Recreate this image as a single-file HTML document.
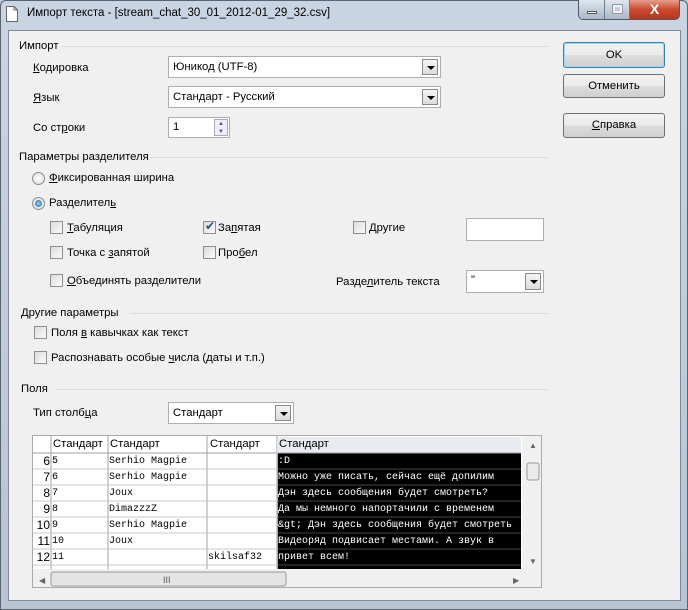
<!DOCTYPE html>
<html><head><meta charset="utf-8"><style>
*{margin:0;padding:0;box-sizing:border-box}
body{width:688px;height:610px;overflow:hidden;background:#bfcbd8;font-family:"Liberation Sans",sans-serif;font-size:11.3px;color:#000;position:relative}
.a{position:absolute;white-space:nowrap}
.frame{position:absolute;left:0;top:0;width:688px;height:610px;background:linear-gradient(#c9d5e2,#b7c4d3);border:1px solid #5a6470;border-radius:6px 6px 0 0}
.client{position:absolute;left:8px;top:30px;width:673px;height:571px;background:#f0f0f0;border:1px solid #7f8a96}
.line{position:absolute;height:1px;background:#d5dfe5}
.btn{position:absolute;width:102px;border:1px solid #707070;border-radius:3px;background:linear-gradient(#f2f2f2 0,#ebebeb 50%,#dddddd 51%,#cfcfcf 100%);text-align:center}
.combo{position:absolute;background:#fff;border:1px solid #abadb3;padding-left:4px}
.dd{position:absolute;right:2px;top:2px;width:16px;bottom:2px;border:1px solid #8a8a8a;background:linear-gradient(#f4f4f4,#dcdcdc)}
.dd:after{content:"";position:absolute;left:4px;top:6px;border-left:4px solid transparent;border-right:4px solid transparent;border-top:4px solid #000}
.cb{position:absolute;width:13px;height:13px;border:1px solid #8e8f8f;background:linear-gradient(135deg,#dcdcdc,#fbfbfb)}
.rb{position:absolute;width:13px;height:13px;border:1px solid #8e8f8f;border-radius:50%;background:radial-gradient(#fff,#d8d8d8)}
u{text-decoration:underline}
.grid{position:absolute;left:32px;top:435px;width:510px;height:153px;border:1px solid #aaa;background:#fff;overflow:hidden}
.mono{font-family:"Liberation Mono",monospace;font-size:10px}
</style></head><body>
<div class="frame"></div>
<svg class="a" style="left:6px;top:6px" width="12" height="16"><path d="M0.5 0.5H8L11.5 4V15.5H0.5Z" fill="#fff" stroke="#666"/><path d="M8 0.5V4H11.5" fill="none" stroke="#666"/></svg>
<div class="a" style="left:27px;top:7px;font-size:11.5px">Импорт текста - [stream_chat_30_01_2012-01_29_32.csv]</div>
<div class="a" style="left:578px;top:0;width:102px;height:20px;border:1px solid #4d5966;border-top:none;border-radius:0 0 5px 5px;overflow:hidden;display:flex">
<div style="width:26px;background:linear-gradient(#dfe6ee,#aab7c5);border-right:1px solid #6e7a88;position:relative"><div style="position:absolute;left:8px;top:11px;width:10px;height:3px;background:#fff;border:1px solid #555"></div></div>
<div style="width:25px;background:linear-gradient(#dfe6ee,#aab7c5);border-right:1px solid #6e7a88;position:relative"><div style="position:absolute;left:8px;top:5px;width:9px;height:8px;border:2px solid #eef;outline:1px solid #999"></div></div>
<div style="flex:1;background:linear-gradient(#e8a08c,#c94a2f 50%,#b8341c);color:#fff;font-weight:bold;font-size:14px;text-align:center;line-height:18px">X</div>
</div>
<div class="client"></div>
<div class="a" style="left:19px;top:40px">Импорт</div>
<div class="line" style="left:62px;top:46px;width:486px"></div>
<div class="a" style="left:33px;top:62px"><u>К</u>одировка</div>
<div class="combo" style="left:168px;top:56px;width:273px;height:22px;line-height:20px">Юникод (UTF-8)<div class="dd"></div></div>
<div class="a" style="left:33px;top:92px"><u>Я</u>зык</div>
<div class="combo" style="left:168px;top:86px;width:273px;height:22px;line-height:20px">Стандарт - Русский<div class="dd"></div></div>
<div class="a" style="left:33px;top:122px">Со ст<u>р</u>оки</div>
<div class="combo" style="left:168px;top:117px;width:62px;height:21px;line-height:19px">1<div style="position:absolute;right:1px;top:1px;width:14px;height:17px;border:1px solid #aaa;background:#eef;font-size:6px;text-align:center;line-height:8px;color:#557">▲<br>▼</div></div>
<div class="btn" style="left:563px;top:42px;height:26px;line-height:24px;border-color:#3c7fb1;box-shadow:inset 0 0 0 1px #9ed9f5">OK</div>
<div class="btn" style="left:563px;top:74px;height:24px;line-height:22px">Отменить</div>
<div class="btn" style="left:563px;top:113px;height:25px;line-height:23px"><u>С</u>правка</div>
<div class="a" style="left:19px;top:151px">Параметры разделителя</div>
<div class="line" style="left:150px;top:157px;width:398px"></div>
<div class="rb" style="left:32px;top:172px"></div>
<div class="a" style="left:49px;top:172px"><u>Ф</u>иксированная ширина</div>
<div class="rb" style="left:32px;top:197px"><div style="position:absolute;left:2px;top:2px;width:7px;height:7px;border-radius:50%;background:radial-gradient(#8fd3ff,#1a5fa8)"></div></div>
<div class="a" style="left:49px;top:197px">Разделител<u>ь</u></div>
<div class="cb" style="left:50px;top:221px"></div><div class="a" style="left:67px;top:222px"><u>Т</u>абуляция</div>
<div class="cb" style="left:203px;top:221px"><span style="position:absolute;left:1px;top:-3px;color:#2a4d8f;font-size:12px">✔</span></div><div class="a" style="left:218px;top:222px">За<u>п</u>ятая</div>
<div class="cb" style="left:353px;top:221px"></div><div class="a" style="left:369px;top:222px"><u>Д</u>ругие</div>
<div class="combo" style="left:466px;top:218px;width:78px;height:23px"></div>
<div class="cb" style="left:50px;top:246px"></div><div class="a" style="left:67px;top:247px">Точка с <u>з</u>апятой</div>
<div class="cb" style="left:203px;top:246px"></div><div class="a" style="left:218px;top:247px">Про<u>б</u>ел</div>
<div class="cb" style="left:50px;top:274px"></div><div class="a" style="left:67px;top:275px"><u>О</u>бъединять разделители</div>
<div class="a" style="left:336px;top:276px">Разде<u>л</u>итель текста</div>
<div class="combo" style="left:466px;top:270px;width:78px;height:23px;line-height:18px">"<div class="dd"></div></div>
<div class="a" style="left:21px;top:307px">Другие параметры</div>
<div class="line" style="left:130px;top:313px;width:418px"></div>
<div class="cb" style="left:34px;top:326px"></div><div class="a" style="left:51px;top:327px">Поля <u>в</u> кавычках как текст</div>
<div class="cb" style="left:34px;top:351px"></div><div class="a" style="left:51px;top:352px">Распознавать особые <u>ч</u>исла (даты и т.п.)</div>
<div class="a" style="left:21px;top:383px">Поля</div>
<div class="line" style="left:55px;top:389px;width:493px"></div>
<div class="a" style="left:33px;top:407px">Тип столб<u>ц</u>а</div>
<div class="combo" style="left:168px;top:402px;width:126px;height:22px;line-height:20px">Стандарт<div class="dd"></div></div>
<div class="grid">
<svg width="510" height="153" style="position:absolute;left:0;top:0">
<rect x="244" y="1" width="244" height="16" fill="#e8ecf0"/>
<rect x="244" y="17" width="244" height="116" fill="#000"/>
<g stroke="#a0a0a0"><line x1="18" y1="0" x2="18" y2="133"/><line x1="75" y1="0" x2="75" y2="133"/><line x1="174" y1="0" x2="174" y2="133"/><line x1="244" y1="0" x2="244" y2="133"/><line x1="0" y1="17" x2="489" y2="17"/></g>
<g stroke="#c8c8c8"><line x1="0" y1="33" x2="244" y2="33"/><line x1="0" y1="49" x2="244" y2="49"/><line x1="0" y1="65" x2="244" y2="65"/><line x1="0" y1="81" x2="244" y2="81"/><line x1="0" y1="97" x2="244" y2="97"/><line x1="0" y1="113" x2="244" y2="113"/><line x1="0" y1="129" x2="244" y2="129"/></g>
<g stroke="#444"><line x1="245" y1="33" x2="488" y2="33"/><line x1="245" y1="49" x2="488" y2="49"/><line x1="245" y1="65" x2="488" y2="65"/><line x1="245" y1="81" x2="488" y2="81"/><line x1="245" y1="97" x2="488" y2="97"/><line x1="245" y1="113" x2="488" y2="113"/><line x1="245" y1="129" x2="488" y2="129"/></g>
<rect x="244.5" y="0.5" width="244" height="133" fill="none" stroke="#fff" stroke-dasharray="1 1"/>
<rect x="489" y="0" width="21" height="133" fill="#f0f0f0"/>
<rect x="494" y="27" width="12" height="17" rx="2" fill="#eaeaea" stroke="#999"/>
<text x="496" y="12" font-size="8" fill="#666">▲</text><text x="496" y="128" font-size="8" fill="#666">▼</text>
<rect x="0" y="133" width="510" height="20" fill="#f0f0f0"/>
<rect x="18" y="136" width="235" height="14" rx="2" fill="#e4e4e4" stroke="#999"/>
<text x="6" y="147" font-size="8" fill="#666">◀</text><text x="480" y="147" font-size="8" fill="#666">▶</text>
<text x="130" y="147" font-size="9" fill="#555">III</text>
</svg>
<div class="a" style="left:20px;top:2px">Стандарт</div>
<div class="a" style="left:77px;top:2px">Стандарт</div>
<div class="a" style="left:177px;top:2px">Стандарт</div>
<div class="a" style="left:246px;top:2px">Стандарт</div>
<div class="a" style="left:0;top:17px;width:17px;line-height:16px;text-align:right;font-size:12px">6<br>7<br>8<br>9<br>10<br>11<br>12</div>
<div class="a mono" style="left:19px;top:18px;line-height:16px">5<br>6<br>7<br>8<br>9<br>10<br>11</div>
<div class="a mono" style="left:76px;top:18px;line-height:16px">Serhio Magpie<br>Serhio Magpie<br>Joux<br>DimazzzZ<br>Serhio Magpie<br>Joux</div>
<div class="a mono" style="left:175px;top:114px;line-height:16px">skilsaf32</div>
<div class="a mono" style="left:245px;top:18px;width:243px;overflow:hidden;line-height:16px;color:#fff">:D<br>Можно уже писать, сейчас ещё допилим<br>Дэн здесь сообщения будет смотреть?<br>Да мы немного напортачили с временем<br>&amp;gt; Дэн здесь сообщения будет смотреть<br>Видеоряд подвисает местами. А звук в<br>привет всем!</div>
</div>
</body></html>
